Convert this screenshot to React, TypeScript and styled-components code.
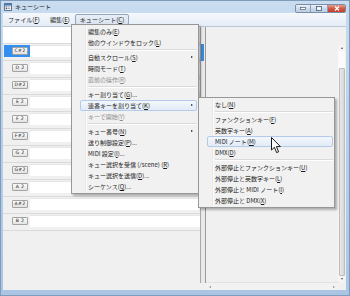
import styled, { createGlobalStyle } from "styled-components";

const GlobalStyle = createGlobalStyle`
  html, body {
    margin: 0;
    padding: 0;
    background: #ffffff;
  }
  body {
    font-family: "Noto Sans CJK JP", "Noto Sans", sans-serif;
    color: #1b1b1b;
  }
`;

const Window = styled.div`
  position: relative;
  width: 350px;
  height: 296px;
  box-sizing: border-box;
  padding: 0 4px 6px 3px;
  display: flex;
  flex-direction: column;
  background: linear-gradient(#c9dcf0, #b9d0e9 40%, #aac5e3);
  box-shadow: inset 0 0 0 1px #7d9bbb;
  overflow: hidden;
`;

const TitleBar = styled.div`
  height: 13px;
  display: flex;
  align-items: center;
  font-size: 6px;
  color: #1a1a1a;
`;

const TitleText = styled.span`
  margin-left: 3px;
  line-height: 13px;
`;

const Controls = styled.div`
  margin-left: auto;
  align-self: flex-start;
  margin-top: 4px;
  display: flex;
  height: 9px;
  border-radius: 2px;
  overflow: hidden;
  border: 1px solid #7b8ea6;
  box-sizing: border-box;
`;

const CtrlBtn = styled.div<{ $w: number; $close?: boolean }>`
  width: ${({ $w }) => $w}px;
  display: flex;
  align-items: center;
  justify-content: center;
  background: ${({ $close }) =>
    $close
      ? "linear-gradient(#e69c8e, #cf5541 55%, #c5412f)"
      : "linear-gradient(#eaf1f9, #c9d8ea 55%, #bccfe5)"};
  border-left: 1px solid #8b9eb6;
  &:first-child {
    border-left: none;
  }
`;

const MenuBar = styled.div`
  height: 13px;
  display: flex;
  align-items: center;
  background: linear-gradient(#f5f8fc, #e4ecf6);
  border-bottom: 1px solid #b9c8d9;
  font-size: 6.1px;
`;

const BarItem = styled.div<{ $open?: boolean }>`
  height: 11px;
  padding: 0 4px;
  box-sizing: border-box;
  border: 1px solid ${({ $open }) => ($open ? "#93a6bd" : "transparent")};
  border-radius: 2px;
  background: ${({ $open }) =>
    $open ? "linear-gradient(#e8eef6, #d9e3ef)" : "transparent"};
  line-height: 9px;
`;

const Body = styled.div`
  flex: 1;
  min-height: 0;
  display: flex;
  background: #f0f0f0;
`;

const LeftPane = styled.div`
  width: 197px;
  display: flex;
  flex-direction: column;
  background: #f0f0f0;
`;

const Row = styled.div<{ $blank?: boolean }>`
  height: 17px;
  box-sizing: border-box;
  padding-top: 1px;
  border-bottom: 1px solid #dadada;
  background: ${({ $blank }) => ($blank ? "#ffffff" : "#f0f0f0")};
`;

const Cell = styled.div<{ $selected?: boolean }>`
  height: 12px;
  display: flex;
  align-items: center;
  margin-left: 1px;
  background: ${({ $selected }) => ($selected ? "#3390f0" : "transparent")};
`;

const KeyButton = styled.div`
  margin-left: 8px;
  width: 16px;
  height: 8px;
  box-sizing: border-box;
  border: 1px solid #a3a3a3;
  border-radius: 1px;
  background: linear-gradient(#fbfbfb, #e2e2e2);
  font-family: "DejaVu Sans", sans-serif;
  font-size: 4.6px;
  line-height: 6px;
  text-align: center;
  color: #222;
  letter-spacing: 0.3px;
`;

const Field = styled.div`
  margin-left: 2px;
  flex: 1;
  height: 12px;
  background: #ffffff;
  border-top: 1px solid #e6e6e6;
  box-sizing: border-box;
`;

const Splitter = styled.div`
  width: 4px;
  border-left: 1px solid #a9a9a9;
  border-right: 1px solid #9a9a9a;
  background: #e9e9e9;
  display: flex;
  flex-direction: column;
  margin-bottom: 7px;
`;

const SplitThumb = styled.div`
  margin-top: 17px;
  height: 17px;
  width: 3px;
  background: #3a8ae0;
`;

const RightPane = styled.div`
  flex: 1;
  display: flex;
`;

const CanvasCol = styled.div`
  flex: 1;
  display: flex;
  flex-direction: column;
`;

const Canvas = styled.div`
  flex: 1;
  background: #f0f0f0;
`;

const HScroll = styled.div`
  height: 7px;
  display: flex;
  align-items: center;
  justify-content: space-between;
  padding: 0 3px;
  background: #f2f2f2;
  border-top: 1px solid #e2e2e2;
`;

const VScroll = styled.div`
  width: 7px;
  margin-top: 18px;
  margin-bottom: 8px;
  margin-right: 1px;
  display: flex;
  flex-direction: column;
  align-items: center;
  background: #f4f4f4;
`;

const ScrollArrow = styled.div<{ $dir: "up" | "down" | "left" | "right" }>`
  width: 0;
  height: 0;
  margin: 2px 0;
  border: 1.5px solid transparent;
  ${({ $dir }) =>
    $dir === "up"
      ? "border-bottom: 2px solid #555; border-top: none;"
      : $dir === "down"
      ? "border-top: 2px solid #555; border-bottom: none;"
      : $dir === "left"
      ? "border-right: 2px solid #888; border-left: none;"
      : "border-left: 2px solid #888; border-right: none;"}
`;

const Track = styled.div`
  height: 17px;
  width: 100%;
  background: #fbfbfb;
`;

const Thumb = styled.div`
  flex: 1;
  width: 6px;
  box-sizing: border-box;
  border: 1px solid #bdbdbd;
  border-radius: 1px;
  background: linear-gradient(90deg, #e9e9e9, #d6d6d6);
`;

const Menu = styled.div<{ $x: number; $y: number; $w: number }>`
  position: absolute;
  left: ${({ $x }) => $x}px;
  top: ${({ $y }) => $y}px;
  width: ${({ $w }) => $w}px;
  box-sizing: border-box;
  padding: 1px 0;
  background: linear-gradient(90deg, #f1f1f1 0 13px, #e8e8e8 13px 14px, #fbfbfb 14px 15px, #f1f1f1 15px);
  border: 1px solid #979797;
  box-shadow: 2px 2px 2px rgba(0, 0, 0, 0.28);
  font-size: 6px;
`;

const Item = styled.div<{ $active?: boolean; $disabled?: boolean }>`
  position: relative;
  height: 11px;
  line-height: 11px;
  padding-left: 16px;
  color: ${({ $disabled }) => ($disabled ? "#8e8e8e" : "#1b1b1b")};
  white-space: nowrap;
  &::before {
    content: "";
    position: absolute;
    left: 8px;
    right: 1px;
    top: 0;
    bottom: 0;
    box-sizing: border-box;
    border-radius: 2px;
    border: 1px solid ${({ $active }) => ($active ? "#b3cbe8" : "transparent")};
    background: ${({ $active }) =>
      $active ? "linear-gradient(#f3f7fc, #e2ebf7)" : "transparent"};
  }
`;

const ItemText = styled.span`
  position: relative;
`;

const SubArrow = styled.span`
  position: absolute;
  right: 5px;
  top: 4px;
  width: 0;
  height: 0;
  border-top: 1.5px solid transparent;
  border-bottom: 1.5px solid transparent;
  border-left: 2px solid #222;
`;

const Sep = styled.div`
  height: 0;
  margin: 1px 1px 1px 16px;
  border-top: 1px solid #dadada;
  border-bottom: 1px solid #ffffff;
`;

const Cursor = styled.svg`
  position: absolute;
  left: 271px;
  top: 137px;
`;

type Entry =
  | { sep: true }
  | {
      sep?: false;
      t: string;
      k: string;
      tail?: string;
      sub?: boolean;
      active?: boolean;
      disabled?: boolean;
    };

const mainMenu: Entry[] = [
  { t: "編集のみ", k: "E" },
  { t: "他のウインドウをロック", k: "L" },
  { sep: true },
  { t: "自動スクロール", k: "S", sub: true },
  { t: "時間モード", k: "T" },
  { t: "直前の操作", k: "R", disabled: true },
  { sep: true },
  { t: "キー割り当て", k: "G", tail: "..." },
  { t: "連番キーを割り当て", k: "K", sub: true, active: true },
  { t: "キーで開始", k: "Y", disabled: true },
  { sep: true },
  { t: "キュー番号", k: "N", sub: true },
  { t: "送り制御設定", k: "P", tail: "..." },
  { t: "MIDI 設定", k: "I", tail: "..." },
  { t: "キュー選択を受信 (/scene) ", k: "R" },
  { t: "キュー選択を送信", k: "D", tail: "..." },
  { t: "シーケンス", k: "Q", tail: "..." },
];

const subMenu: Entry[] = [
  { t: "なし", k: "N" },
  { sep: true },
  { t: "ファンクションキー", k: "F" },
  { t: "英数字キー", k: "A" },
  { t: "MIDI ノート", k: "M", active: true },
  { t: "DMX", k: "D" },
  { sep: true },
  { t: "外部停止とファンクションキー", k: "U" },
  { t: "外部停止と英数字キー", k: "L" },
  { t: "外部停止と MIDI ノート", k: "I" },
  { t: "外部停止と DMX", k: "X" },
];

const keys = ["C#2", "D 2", "D#2", "E 2", "F 2", "F#2", "G 2", "G#2", "A 2", "A#2", "B 2"];

const MenuList = ({ items }: { items: Entry[] }) => (
  <>
    {items.map((e, i) =>
      e.sep ? (
        <Sep key={i} />
      ) : (
        <Item key={i} $active={e.active} $disabled={e.disabled}>
          <ItemText>
            {e.t}(<u>{e.k}</u>){e.tail}
          </ItemText>
          {e.sub && <SubArrow />}
        </Item>
      )
    )}
  </>
);

const AppIcon = () => (
  <svg width="8" height="8" viewBox="0 0 8 8">
    <rect x="0.5" y="0.5" width="7" height="7" fill="#fff" stroke="#5b7696" />
    <rect x="1" y="1" width="6" height="1.6" fill="#3f79c4" />
    <rect x="1.6" y="3.4" width="1.4" height="1" fill="#333" />
    <rect x="3.4" y="3.4" width="3" height="1" fill="#999" />
    <rect x="1.6" y="5.2" width="1.4" height="1" fill="#333" />
    <rect x="3.4" y="5.2" width="3" height="1" fill="#999" />
  </svg>
);

export default function App() {
  return (
    <>
      <GlobalStyle />
      <Window>
        <TitleBar>
          <span style={{ marginLeft: 1, display: "flex" }}>
            <AppIcon />
          </span>
          <TitleText>キューシート</TitleText>
          <Controls>
            <CtrlBtn $w={14}>
              <svg width="6" height="3">
                <rect x="0.5" y="0.5" width="5" height="2" fill="#fff" stroke="#4a5e78" strokeWidth="0.7" />
              </svg>
            </CtrlBtn>
            <CtrlBtn $w={16}>
              <svg width="6" height="5">
                <rect x="0.5" y="0.5" width="5" height="4" fill="none" stroke="#4a5e78" strokeWidth="0.8" />
                <rect x="1.3" y="1.6" width="3.4" height="2.2" fill="#fff" />
              </svg>
            </CtrlBtn>
            <CtrlBtn $w={17} $close>
              <svg width="6" height="5" viewBox="0 0 6 5">
                <path d="M1 0.5 L5 4.5 M5 0.5 L1 4.5" stroke="#fff" strokeWidth="1.3" />
              </svg>
            </CtrlBtn>
          </Controls>
        </TitleBar>
        <MenuBar>
          <BarItem>
            ファイル(<u>F</u>)
          </BarItem>
          <BarItem>
            編集(<u>E</u>)
          </BarItem>
          <BarItem $open>
            キューシート(<u>C</u>)
          </BarItem>
        </MenuBar>
        <Body>
          <LeftPane>
            <Row $blank />
            {keys.map((k, i) => (
              <Row key={k}>
                <Cell $selected={i === 0}>
                  <KeyButton>{k}</KeyButton>
                  <Field />
                </Cell>
              </Row>
            ))}
          </LeftPane>
          <Splitter>
            <SplitThumb />
          </Splitter>
          <RightPane>
            <CanvasCol>
              <Canvas />
              <HScroll>
                <ScrollArrow $dir="left" />
                <ScrollArrow $dir="right" />
              </HScroll>
            </CanvasCol>
            <VScroll>
              <ScrollArrow $dir="up" />
              <Track />
              <Thumb />
              <ScrollArrow $dir="down" />
            </VScroll>
          </RightPane>
        </Body>
        <Menu $x={71} $y={24} $w={128}>
          <MenuList items={mainMenu} />
        </Menu>
        <Menu $x={198} $y={97} $w={137}>
          <MenuList items={subMenu} />
        </Menu>
        <Cursor width="11" height="17" viewBox="0 0 11 17">
          <path
            d="M0.5 0.5 L0.5 13 L3.4 10.3 L5.6 15.6 L7.6 14.8 L5.4 9.6 L9.4 9.6 Z"
            fill="#fff"
            stroke="#000"
            strokeWidth="0.9"
            strokeLinejoin="round"
          />
        </Cursor>
      </Window>
    </>
  );
}
